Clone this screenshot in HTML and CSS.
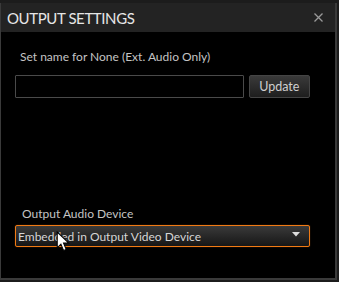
FILE: index.html
```html
<!DOCTYPE html>
<html lang="en">
<head>
<meta charset="UTF-8" />
<title>Output Settings</title>
<link rel="stylesheet" href="styles.css">
</head>
<body>
<div class="dialog">
  <div class="titlebar">
    <span class="title">OUTPUT SETTINGS</span>
    <svg class="close" width="9" height="9" viewBox="0 0 9 9"><path d="M0.5 0.5L8.5 8.5M8.5 0.5L0.5 8.5" stroke="#9a9a9a" stroke-width="1.3"/></svg>
  </div>
  <div class="content">
    <div class="label">Set name for None (Ext. Audio Only)</div>
    <div class="name-row">
      <input class="name-input" type="text" value="">
      <button class="btn">Update</button>
    </div>
    <div class="spacer"></div>
    <div class="label label-audio">Output Audio Device</div>
    <div class="select">
      <span>Embedded in Output Video Device</span>
      <svg class="caret" width="8" height="5" viewBox="0 0 8 5"><path d="M0 0H8L4 4.5Z" fill="#ddd"/></svg>
      <svg class="cursor" width="14" height="21" viewBox="0 0 13 20"><path d="M1 1V16L4.5 12.5L7 18.5L9.5 17.5L7 11.5H12Z" fill="#fff" stroke="#000" stroke-width="1"/></svg>
    </div>
  </div>
</div>
</body>
</html>
```

FILE: styles.css
```css
* {
  box-sizing: border-box;
}
body {
  margin: 0;
  background: #1c1c1c;
  font-family: Lato, 'Noto Sans', sans-serif;
  width: 339px;
  height: 282px;
  overflow: hidden;
}
.dialog {
  margin-top: 3px;
  width: 337px;
  height: 277px;
  background: #000;
  border: 1px solid #3a3a3a;
  border-width: 0 2px 2px 1px;
  display: flex;
  flex-direction: column;
}
.titlebar {
  height: 29px;
  background: #232323;
  display: flex;
  align-items: center;
  justify-content: space-between;
  padding: 0 12px 0 6px;
}
.title {
  color: #e6e6e6;
  font-size: 15px;
  letter-spacing: -0.4px;
}
.content {
  flex: 1;
  display: flex;
  flex-direction: column;
  padding: 17px 25px 0 14px;
}
.label {
  color: #c4c4c4;
  font-size: 12px;
  padding-left: 5px;
  height: 16px;
}
.name-row {
  display: flex;
  gap: 5px;
  margin-top: 10px;
}
.name-input {
  width: 231px;
  height: 23px;
  background: #000;
  border: 1px solid #4a4a4a;
  border-radius: 1px;
  margin: 0;
}
.btn {
  width: 62px;
  height: 23px;
  background: linear-gradient(#3a3a3a, #1e1e1e);
  border: 1px solid #454545;
  border-radius: 2px;
  color: #cfcfcf;
  font-family: inherit;
  font-size: 12.5px;
  padding: 0;
}
.spacer {
  flex: 0 0 108px;
}
.label-audio {
  padding-left: 7px;
}
.select {
  position: relative;
  width: 295px;
  height: 22px;
  margin-top: 3px;
  border: 1px solid #f07a14;
  border-radius: 2px;
  box-shadow: 0 0 1px #b0560c;
  background: linear-gradient(#3a3a3a, #161616);
  display: flex;
  align-items: center;
  justify-content: space-between;
  padding: 0 9px 0 2px;
  color: #d6d6d6;
  font-size: 12px;
}
.caret {
  margin-top: -4px;
}
.cursor {
  position: absolute;
  left: 40px;
  top: 5px;
}
```
